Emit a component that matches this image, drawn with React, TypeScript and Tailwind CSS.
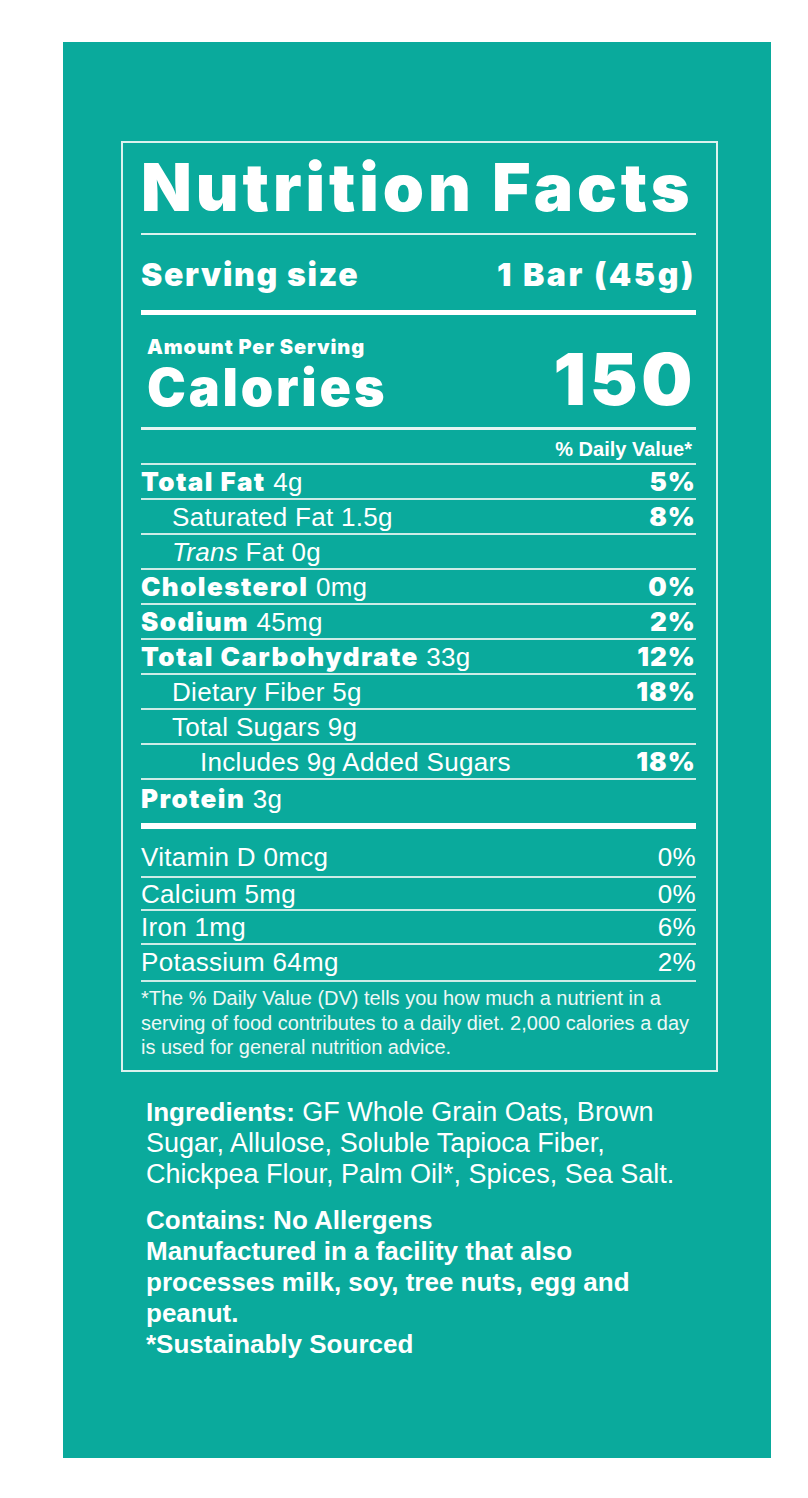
type Row = {
  bold?: string;
  italic?: string;
  text?: string;
  pct?: string;
  indent?: 0 | 1 | 2;
};

const rows: Row[] = [
  { bold: "Total Fat", text: " 4g", pct: "5%" },
  { text: "Saturated Fat 1.5g", pct: "8%", indent: 1 },
  { italic: "Trans", text: " Fat 0g", indent: 1 },
  { bold: "Cholesterol", text: " 0mg", pct: "0%" },
  { bold: "Sodium", text: " 45mg", pct: "2%" },
  { bold: "Total Carbohydrate", text: " 33g", pct: "12%" },
  { text: "Dietary Fiber 5g", pct: "18%", indent: 1 },
  { text: "Total Sugars 9g", indent: 1 },
  { text: "Includes 9g Added Sugars", pct: "18%", indent: 2 },
];

const vitamins = [
  { text: "Vitamin D 0mcg", pct: "0%", cls: "h-[49px] pt-[9px]" },
  { text: "Calcium 5mg", pct: "0%", cls: "h-[33px]" },
  { text: "Iron 1mg", pct: "6%", cls: "h-[34px]" },
  { text: "Potassium 64mg", pct: "2%", cls: "h-[37px] pb-[2px]" },
];

const heavy = "font-['Inter',sans-serif] font-black";
const plain = "font-['Liberation_Sans',Arial,sans-serif]";

function NutrientRow({ row }: { row: Row }) {
  const pad = row.indent === 2 ? "pl-[59px]" : row.indent === 1 ? "pl-[31px]" : "";
  return (
    <div className="h-[35px] flex items-center justify-between border-b-2 border-[#cdece7]">
      <div className={`${pad} ${plain} text-[26px] leading-none tracking-[0.3px]`}>
        {row.bold && <span className={`${heavy} text-[26px] tracking-[0.055em]`}>{row.bold}</span>}
        {row.italic && <span className="italic">{row.italic}</span>}
        {row.text}
      </div>
      {row.pct && <div className={`${heavy} text-[26px] leading-none tracking-[0.04em]`}>{row.pct}</div>}
    </div>
  );
}

export default function App() {
  return (
    <div className="min-h-screen bg-white pl-[63px] pt-[42px]">
      <div className="w-[708px] h-[1416px] bg-[#0aaa9c] text-white pl-[58px] pt-[99px]">
        <div className="w-[597px] border-2 border-[#dcf2ee] pl-[18px] pr-[20px] pt-[11px]">
          <h1 className={`${heavy} text-[66px] leading-none tracking-[0.06em]`}>Nutrition Facts</h1>
          <div className="mt-[13px] h-[2px] bg-[#dcf2ee]" />
          <div className={`h-[75px] pt-[5px] flex items-center justify-between ${heavy} text-[32px] leading-none`}>
            <span className="tracking-[0.052em]">Serving size</span>
            <span className="tracking-[0.08em]">1 Bar (45g)</span>
          </div>
          <div className="h-[5px] bg-white" />

          <div className="h-[112px] pb-[12px] flex items-end justify-between">
            <div className="mb-[1px] pl-[6px]">
              <div className={`${heavy} text-[20px] leading-none tracking-[0.045em]`}>Amount Per Serving</div>
              <div className={`${heavy} mt-[5px] text-[52px] leading-none tracking-[0.054em]`}>Calories</div>
            </div>
            <div className={`${heavy} text-[72px] leading-none tracking-[0.05em]`}>150</div>
          </div>
          <div className="h-[3px] bg-[#e4f5f2]" />

          <div className={`h-[33px] pt-[4px] pr-[4px] flex items-center justify-end ${plain} font-bold text-[20px]`}>
            % Daily Value*
          </div>
          <div className="h-[2px] bg-[#cdece7]" />

          {rows.map((r, i) => (
            <NutrientRow key={i} row={r} />
          ))}
          <div className={`h-[43px] pb-[5px] flex items-center ${plain} text-[26px] leading-none tracking-[0.3px]`}>
            <span className={`${heavy} text-[26px] tracking-[0.055em]`}>Protein</span>&nbsp;3g
          </div>
          <div className="h-[6px] bg-white" />

          {vitamins.map((v) => (
            <div
              key={v.text}
              className={`${v.cls} flex items-center justify-between border-b-2 border-[#cdece7] ${plain} text-[26px] leading-none tracking-[0.3px]`}
            >
              <span>{v.text}</span>
              <span>{v.pct}</span>
            </div>
          ))}

          <p className={`pt-[4px] pb-[10px] whitespace-nowrap ${plain} text-[20px] leading-[24.5px] text-[#eef8f6]`}>
            *The % Daily Value (DV) tells you how much a nutrient in a
            <br />
            serving of food contributes to a daily diet. 2,000 calories a day
            <br />
            is used for general nutrition advice.
          </p>
        </div>

        <div className={`ml-[25px] mt-[25px] whitespace-nowrap ${plain} leading-[31px]`}>
          <p className="text-[27px]">
            <span className="font-bold text-[26px]">Ingredients:</span> GF Whole Grain Oats, Brown
            <br />
            Sugar, Allulose, Soluble Tapioca Fiber,
            <br />
            Chickpea Flour, Palm Oil*, Spices, Sea Salt.
          </p>
          <p className="mt-[15px] font-bold text-[26px]">
            Contains: No Allergens
            <br />
            Manufactured in a facility that also
            <br />
            processes milk, soy, tree nuts, egg and
            <br />
            peanut.
            <br />
            *Sustainably Sourced
          </p>
        </div>
      </div>
    </div>
  );
}
